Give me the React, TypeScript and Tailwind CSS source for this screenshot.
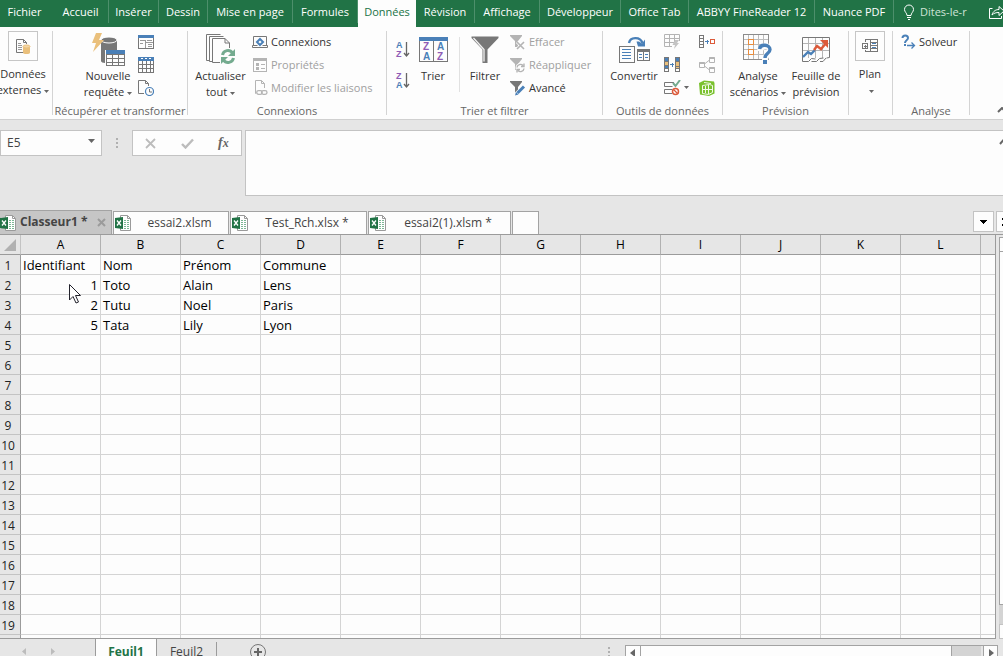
import React from 'react';
import clsx from 'clsx';

const GREY = '#777777';
const LIGHT = '#b4b4b4';
const BLUE = '#4a80b8';
const TAN = '#eac07c';
const RED = '#dc5a3a';
const GREEN = '#74ab8f';
const PURPLE = '#8f5bb5';

const ribbonTabs = [
  { name: 'Fichier', width: 'w-[49px]', divider: false },
  { name: 'Accueil', width: 'w-[60px] pl-1', divider: true },
  { name: 'Insérer', width: 'w-[50px]', divider: true },
  { name: 'Dessin', width: 'w-[49px]', divider: true },
  { name: 'Mise en page', width: 'w-[85px]', divider: true },
  { name: 'Formules', width: 'w-[65px]', divider: true },
  { name: 'Données', width: 'w-[58px]', divider: false },
  { name: 'Révision', width: 'w-[59px]', divider: true },
  { name: 'Affichage', width: 'w-[65px]', divider: true },
  { name: 'Développeur', width: 'w-[81px]', divider: true },
  { name: 'Office Tab', width: 'w-[68px]', divider: true },
  { name: 'ABBYY FineReader 12', width: 'w-[126px]', divider: true },
  { name: 'Nuance PDF', width: 'w-[79px]', divider: true },
];

const columns = ['A', 'B', 'C', 'D', 'E', 'F', 'G', 'H', 'I', 'J', 'K', 'L', ''];

const data: string[][] = [
  ['Identifiant', 'Nom', 'Prénom', 'Commune'],
  ['1', 'Toto', 'Alain', 'Lens'],
  ['2', 'Tutu', 'Noel', 'Paris'],
  ['5', 'Tata', 'Lily', 'Lyon'],
];

interface IconProps {
  w: number;
  h: number;
  crisp?: boolean;
  className?: string;
  children: React.ReactNode;
}

const Icon: React.FC<IconProps> = ({ w, h, crisp, className, children }) => (
  <svg
    width={w}
    height={h}
    viewBox={`0 0 ${w} ${h}`}
    fill="none"
    shapeRendering={crisp ? 'crispEdges' : undefined}
    className={clsx('block shrink-0', className)}
    aria-hidden="true"
  >
    {children}
  </svg>
);

const Caret = ({ color = '#666666' }: { color?: string }) => (
  <Icon w={5} h={3} className="ml-[3px] inline-block align-middle">
    <path d="M0 0h5L2.5 3z" fill={color} />
  </Icon>
);

/* ---------- ribbon icons ---------- */

const ExternalDataIcon = () => (
  <Icon w={16} h={18}>
    <path d="M9.500 15.500H1.500V2.500H8.500L11.500 5.500V7M8.500 2.500V5.500H11.500" stroke={GREY} />
    <path d="M3 6.500h3M3 8.500h4M3 10.500h4M3 12.500h4" stroke="#999999" />
    <path d="M8 9.500v6c0 1 1.500 1.500 3.500 1.500s3.500-.5 3.500-1.500v-6z" fill={TAN} />
    <ellipse cx="11.500" cy="9.500" rx="3.500" ry="1.500" fill="#f2d5a5" stroke={TAN} />
  </Icon>
);

const NewQueryIcon = () => (
  <Icon w={34} h={34}>
    <path d="M10 7v21c0 1 2 2 4 2V18h12V7z" fill={GREY} />
    <ellipse cx="18" cy="7" rx="8" ry="3" fill={GREY} stroke="#fdfdfd" />
    <path d="M5 0h6L8 7h5L2 19l3-9H1z" fill={TAN} />
    <g shapeRendering="crispEdges">
      <path d="M14 17h20v16H14z" fill="#fdfdfd" />
      <path d="M15 17h19v4H15z" fill={BLUE} />
      <path d="M15.500 21.500h18v11h-18zM15 25.500h19M15 29.500h19M21.500 21v12M27.500 21v12" stroke={GREY} />
    </g>
  </Icon>
);

const QueryPaneIcon = () => (
  <Icon w={16} h={14} crisp>
    <path d="M.5.5h15v13H.5z" stroke={GREY} />
    <path d="M0 0h16v3H0z" fill={BLUE} />
    <path d="M2 5.500h5M2 8.500h3M7.500 5v8M8 7.500h7M9 5.500h5M10 9.500h4M10 11.500h4" stroke="#999999" />
  </Icon>
);

const FromTableIcon = () => (
  <Icon w={16} h={16} crisp>
    <path d="M.5.5h15v15H.5zM0 7.500h16M0 11.500h16M4.500 4v12M8.500 4v12M12.500 4v12" stroke={GREY} />
    <path d="M0 0h16v4H0z" fill={BLUE} />
    <path d="M3 1h2l-1 2zM7 1h2l-1 2zM11 1h2l-1 2z" fill="#ffffff" />
  </Icon>
);

const RecentSourcesIcon = () => (
  <Icon w={16} h={16}>
    <path d="M6 13.500H.5V.5H7.500L10.500 3.500V6M7.500.5V3.500H10.500" stroke={GREY} />
    <circle cx="11.500" cy="11.500" r="4" fill="#fdfdfd" stroke={BLUE} strokeWidth="1.200" />
    <path d="M11.500 9v3H14" stroke={GREY} />
  </Icon>
);

const RefreshAllIcon = () => (
  <Icon w={30} h={31}>
    <path d="M3.500 26.500h-3V.5h14M6.500 27.500h-3v-25h14M14 28.500H6.500V4.500H19L23.500 9V14M19 4.500V9H23.500" stroke={GREY} />
    <path d="M16.500 21a5.500 5.500 0 0 1 10-2" stroke={GREEN} strokeWidth="3" />
    <path d="M29 15v7h-7z" fill={GREEN} />
    <path d="M27.500 24a5.500 5.500 0 0 1-10 2" stroke={GREEN} strokeWidth="3" />
    <path d="M15 30v-7h7z" fill={GREEN} />
  </Icon>
);

const ConnectionsIcon = () => (
  <Icon w={16} h={16}>
    <path d="M1.500 11V2.500h13V11" stroke={GREY} />
    <path d="M.5 11.500h5M10.500 11.500h5v2H.5v-2" stroke={GREY} />
    <path d="M8 5l3 3-3 3-3-3z" stroke={BLUE} strokeWidth="2" />
  </Icon>
);

const PropertiesIcon = () => (
  <Icon w={16} h={16} crisp>
    <path d="M1.500 1.500h13v13h-13z" stroke={LIGHT} />
    <path d="M1 1h14v3H1z" fill={LIGHT} />
    <path d="M4 6h3v3H4zM4 10h3v3H4z" fill={LIGHT} />
    <path d="M9 7.500h4M9 11.500h4" stroke={LIGHT} />
  </Icon>
);

const EditLinksIcon = () => (
  <Icon w={16} h={16}>
    <path d="M4 13.500H3.500V.5H9.500L12.500 3.500V8M9.500.5V3.500H12.500" stroke={LIGHT} />
    <rect x="4.700" y="10.700" width="5.500" height="3.600" rx="1.800" stroke={LIGHT} strokeWidth="1.300" />
    <rect x="9.500" y="10.700" width="5.500" height="3.600" rx="1.800" stroke={LIGHT} strokeWidth="1.300" />
  </Icon>
);

const letter = "font-['Liberation_Sans',sans-serif] font-bold";

const SortGlyph = ({ top, bottom, topColor, bottomColor }: { top: string; bottom: string; topColor: string; bottomColor: string }) => (
  <Icon w={15} h={18} className="overflow-visible">
    <text x="1" y="8" fontSize="9" className={letter} fill={topColor}>{top}</text>
    <text x="1" y="17" fontSize="9" className={letter} fill={bottomColor}>{bottom}</text>
    <path d="M11.500 2v14M9 13l2.500 3 2.500-3" stroke="#666666" strokeWidth="1.300" />
  </Icon>
);

const SortIcon = () => (
  <Icon w={29} h={25} className="overflow-visible">
    <g shapeRendering="crispEdges">
      <path d="M.5.5h28v24H.5zM14.500 4v21" stroke={GREY} />
      <path d="M0 0h29v4H0z" fill={BLUE} />
    </g>
    <text x="4" y="13" fontSize="10" className={letter} fill={PURPLE}>Z</text>
    <text x="18" y="13" fontSize="10" className={letter} fill={BLUE}>A</text>
    <text x="4" y="23" fontSize="10" className={letter} fill={BLUE}>A</text>
    <text x="18" y="23" fontSize="10" className={letter} fill={PURPLE}>Z</text>
  </Icon>
);

const FilterIcon = () => (
  <Icon w={28} h={28}>
    <path d="M.5.5h27v1.500L16.500 13.500V27h-5V13.500L.5 2z" fill={GREY} />
    <path d="M2.500 2l10.500 11.500V25.500" stroke="#f2f2f2" strokeWidth="1.300" />
  </Icon>
);

const ClearIcon = () => (
  <Icon w={16} h={16}>
    <path d="M0 1h12v1L8 7v6H5V7L0 2z" fill={LIGHT} />
    <path d="M7 8l7 7M14 8l-7 7" stroke="#fdfdfd" strokeWidth="3" />
    <path d="M7 8l7 7M14 8l-7 7" stroke={LIGHT} strokeWidth="1.600" />
  </Icon>
);

const ReapplyIcon = () => (
  <Icon w={16} h={16}>
    <path d="M0 1h12v1L8 7v6H5V7L0 2z" fill={LIGHT} />
    <circle cx="10.500" cy="11" r="5" fill="#fdfdfd" />
    <path d="M7 10.500a3.500 3.500 0 0 1 6-2M14 6.500v3h-3M14 11.500a3.500 3.500 0 0 1-6 2M7 15.500v-3h3" stroke={LIGHT} strokeWidth="1.400" />
  </Icon>
);

const AdvancedIcon = () => (
  <Icon w={16} h={16}>
    <path d="M0 1h12v1L8 7v6H5V7L0 2z" fill={GREY} />
    <path d="M6.500 14.500L14 7" stroke="#fdfdfd" strokeWidth="5" />
    <path d="M7.500 13L14 6.500" stroke={BLUE} strokeWidth="3" />
    <path d="M5 15.500l1-3.500 2.500 2.500z" fill={BLUE} />
  </Icon>
);

const ConvertIcon = () => (
  <Icon w={31} h={27}>
    <path d="M10 7C11 1 21 0 23.500 7" stroke={BLUE} strokeWidth="2.400" />
    <path d="M17.500 5.500H20l3 2 3-4v7h-7z" fill={BLUE} />
    <g shapeRendering="crispEdges">
      <path d="M.5 10.500h15v16H.5z" stroke={GREY} fill="#fdfdfd" />
      <path d="M3 13.500h9M3 16.500h9M3 19.500h9M3 22.500h9" stroke={BLUE} />
      <path d="M18.500 13.500h12v11h-12zM24.500 16v8" stroke={GREY} />
      <path d="M18 13h13v3H18z" fill={GREY} />
      <path d="M20 18.500h3M26 18.500h3M20 21.500h3M26 21.500h3" stroke={BLUE} />
    </g>
  </Icon>
);

const FlashFillIcon = () => (
  <Icon w={16} h={16}>
    <path d="M.5.5h15v4H.5zM.5 4.500v8H8M.5 8.500H10M5.500 0v13M10.500 0v8M15.500 4v3" stroke={LIGHT} />
    <path d="M11 6h4l-2 3h2l-5 6 1-4H8.500z" fill="#c4c4c4" />
  </Icon>
);

const DuplicatesIcon = () => (
  <Icon w={16} h={15} crisp>
    <path d="M0 0h5v15H0zM11 0h5v15h-5z" fill={GREY} />
    <path d="M1 1h3v3H1zM1 9h3v2H1zM12 1h3v3h-3z" fill={BLUE} />
    <path d="M1 5h3v3H1zM12 5h3v4h-3zM12 10h3v1h-3z" fill={TAN} />
    <path d="M1 12h3v2H1zM12 12h3v2h-3z" fill="#fdfdfd" />
    <path d="M6 7.500h4M8.500 5.500v4" stroke={BLUE} />
  </Icon>
);

const ValidationIcon = () => (
  <Icon w={17} h={16}>
    <path d="M10 2.500H.5v4h8M8 9.500H.5v4H8" stroke={GREY} />
    <path d="M9 3l2.500 3L16 0" stroke={GREEN} strokeWidth="2" />
    <circle cx="11.500" cy="11.500" r="3" fill="#fdfdfd" stroke={RED} strokeWidth="1.500" />
    <path d="M9.500 9.500l4 4" stroke={RED} strokeWidth="1.300" />
  </Icon>
);

const ConsolidateIcon = () => (
  <Icon w={16} h={13} crisp>
    <path d="M.5.5h4v12h-4zM0 3.500h5M0 6.500h5M0 9.500h5" stroke={GREY} />
    <path d="M6 6.500h4M8.500 4.500v4" stroke={BLUE} />
    <path d="M11.500 4.500h4v4h-4z" stroke={RED} />
  </Icon>
);

const RelationsIcon = () => (
  <Icon w={16} h={16}>
    <path d="M.5 5.500h5v5h-5zM10.500.5h5v5h-5zM10.500 10.500h5v5h-5zM5.500 7l5-4M5.500 9l5 4" stroke={LIGHT} />
    <path d="M.5 6h5M10.500 1h5M10.500 11h5" stroke={LIGHT} strokeWidth="2" />
  </Icon>
);

const DataModelIcon = () => (
  <Icon w={16} h={16}>
    <path d="M0 3l5-2.500 10 1 .5 2v10L10 16l-9-1.500z" fill="#7ac12f" />
    <path d="M3.500 5.500l7-1 3 1v7l-4 2-6-1zM5 2.500l7 1" stroke="#f1f9e8" />
    <path d="M6.500 6v7M9.500 5v9M4 9.500h9" stroke="#f1f9e8" />
  </Icon>
);

const WhatIfIcon = () => (
  <Icon w={31} h={31}>
    <g shapeRendering="crispEdges">
      <path d="M5.500 0v26M10.500 0v26M15.500 0v26M20.500 0v26M0 5.500h26M0 10.500h26M0 15.500h26M0 20.500h26" stroke="#bdbdbd" />
      <path d="M.5.500h25v25H.5z" stroke="#8c8c8c" />
      <path d="M5.500 5.500h5v5h-5zM5.500 15.500h5v5h-5z" fill="#fdfdfd" stroke="#e88c3c" />
    </g>
    <path d="M17 17c0-6 10.500-6 10.500-1 0 4-5.500 4-5.500 10" stroke="#fdfdfd" strokeWidth="6" />
    <path d="M16.500 15c1-5.500 10.500-4.500 10.500.5 0 4-5 3.500-5 8.500" stroke={BLUE} strokeWidth="3.400" />
    <path d="M20 26h4v4h-4z" fill={BLUE} />
  </Icon>
);

const ForecastIcon = () => (
  <Icon w={28} h={26}>
    <path d="M6.500 0v21M13.500 0v21M20.500 0v21M0 6.500h28M0 13.500h28" stroke="#b5b5b5" shapeRendering="crispEdges" />
    <path d="M.5.500h27v20l-3 .5M.5.500v24h6l3-3 4 .5M9.500 24.500h5l3-3 4-.5M18 24.500h3l3-3.500" stroke={GREY} />
    <path d="M1 20l5-5 3 2 4-4" stroke={BLUE} strokeWidth="2.400" />
    <path d="M12 13l3-4 4 3 6-7" stroke={RED} strokeWidth="2.400" />
    <path d="M18 3h8v8z" fill={RED} />
  </Icon>
);

const OutlineIcon = () => (
  <Icon w={16} h={14} crisp>
    <path d="M5 .5h2.500M5 12.500h2.500M.5 4.500h5v5h-5zM2 7.500h3M3.500 6v3M8.500.5h7v12h-7zM8 3.500h8M8 6.500h8M8 9.500h8" stroke={GREY} />
    <path d="M3.500 3V.5H5M3.500 11v1.500H5" stroke={GREY} />
    <path d="M10 4.500h4M10 8.500h4" stroke={BLUE} />
  </Icon>
);

const SolverIcon = () => (
  <Icon w={15} h={15}>
    <path d="M1.500 4c0-3.500 5.500-3.500 5.500 0 0 2.500-3 2-3 5" stroke={BLUE} strokeWidth="2" />
    <path d="M3 10h2v2H3z" fill={BLUE} />
    <path d="M6 11.500h7M10.500 8.500l3 3-3 3" stroke={BLUE} strokeWidth="1.300" />
  </Icon>
);

const ExcelFileIcon = () => (
  <Icon w={16} h={16}>
    <path d="M5.500.5h7l3 3v12h-10z" fill="#ffffff" stroke="#9a9a9a" />
    <path d="M12.500.5v3h3" stroke="#9a9a9a" />
    <path d="M9 5.500h2M12 5.500h2M9 7.500h2M12 7.500h2M9 9.500h2M12 9.500h2M9 11.500h2M12 11.500h2M9 13.500h2M12 13.500h2" stroke="#7db795" />
    <path d="M0 3l8-1v12l-8-1z" fill="#217346" />
    <path d="M2 5.500l4 5M6 5.500l-4 5" stroke="#ffffff" strokeWidth="1.300" />
  </Icon>
);

/* ---------- ribbon building blocks ---------- */

const Group: React.FC<{ label?: string; width: string; children: React.ReactNode }> = ({ label, width, children }) => (
  <section className={clsx('flex shrink-0', width)}>
    <div className="flex min-w-0 flex-1 flex-col">
      <div className="flex flex-1 items-start">{children}</div>
      <div className="h-4 text-center leading-4 whitespace-nowrap text-[#666666]">{label}</div>
    </div>
    <div className="my-1 w-px bg-[#d4d4d4]" />
  </section>
);

const BigButton: React.FC<{ icon: React.ReactNode; width: string; children: React.ReactNode }> = ({ icon, width, children }) => (
  <button className={clsx('flex shrink-0 flex-col items-center pt-1 leading-4 whitespace-nowrap', width)}>
    <span className="flex h-[37px] items-center">{icon}</span>
    <span>{children}</span>
  </button>
);

const BoxedButton: React.FC<{ icon: React.ReactNode; width: string; children: React.ReactNode }> = ({ icon, width, children }) => (
  <button className={clsx('flex shrink-0 flex-col items-center pt-1 leading-4 whitespace-nowrap', width)}>
    <span className="mb-[5px] flex size-[30px] items-center justify-center border border-[#c6c6c6]">{icon}</span>
    <span>{children}</span>
  </button>
);

const SmallButton: React.FC<{ icon: React.ReactNode; label: string; disabled?: boolean }> = ({ icon, label, disabled }) => (
  <button
    disabled={disabled}
    className={clsx('flex h-[23px] items-center gap-[3px] whitespace-nowrap', disabled && 'text-[#a0a0a0]')}
  >
    {icon}
    {label}
  </button>
);

const IconButton: React.FC<{ label: string; children: React.ReactNode }> = ({ label, children }) => (
  <button aria-label={label} className="flex h-[23px] items-center">
    {children}
  </button>
);

const RibbonTabs = () => (
  <nav className="flex h-[27px] shrink-0 overflow-hidden bg-[#217346] text-[11px] text-white">
    {ribbonTabs.map((tab) => (
      <div key={tab.name} className={clsx('flex shrink-0', tab.width)}>
        <button
          className={clsx(
            'flex flex-1 items-center justify-center pb-[3px] whitespace-nowrap',
            tab.name === 'Données' && 'bg-[#fdfdfd] text-[#217346]'
          )}
        >
          {tab.name}
        </button>
        {tab.divider && <div className="mb-1 w-px bg-[#4d8f6b]" />}
      </div>
    ))}
    <button className="flex flex-1 items-center gap-1 pb-[3px] pl-2 whitespace-nowrap text-[#cfe3d7]">
      <Icon w={14} h={16}>
        <path d="M5 11.500C5 9 2.500 8 2.500 5.500a4.500 4.500 0 0 1 9 0C11.500 8 9 9 9 11.500zM5 13.500h4M6 15.500h2" stroke="#ffffff" />
      </Icon>
      Dites-le-r
    </button>
    <button aria-label="Partager" className="flex w-[14px] shrink-0 items-center overflow-hidden pb-[3px]">
      <Icon w={17} h={16}>
        <path d="M3.500 4.500H.5v10h12V12M3 11c1-4 4-5.500 7-5.500v-3l5 4.500-5 4.500v-3c-3 0-5 .5-7 2.500z" stroke="#ffffff" />
      </Icon>
    </button>
  </nav>
);

const Ribbon = () => (
  <div className="flex h-[93px] shrink-0 overflow-hidden border-b border-[#d0d0d0] bg-[#fdfdfd] text-[11px] text-[#333333]">
    <Group width="w-[53px]">
      <BoxedButton icon={<ExternalDataIcon />} width="w-[46px]">
        Données<br />externes<Caret />
      </BoxedButton>
    </Group>

    <Group label="Récupérer et transformer" width="w-[135px]">
      <BigButton icon={<NewQueryIcon />} width="ml-7 w-[54px]">
        Nouvelle<br />requête<Caret />
      </BigButton>
      <div className="ml-[3px] flex flex-col pt-[3px]">
        <IconButton label="Afficher les requêtes"><QueryPaneIcon /></IconButton>
        <IconButton label="À partir d'un tableau"><FromTableIcon /></IconButton>
        <IconButton label="Sources récentes"><RecentSourcesIcon /></IconButton>
      </div>
    </Group>

    <Group label="Connexions" width="w-[199px]">
      <BigButton icon={<RefreshAllIcon />} width="ml-0.5 w-[61px]">
        Actualiser<br />tout<Caret />
      </BigButton>
      <div className="flex flex-col pt-[3px] pl-px">
        <SmallButton icon={<ConnectionsIcon />} label="Connexions" />
        <SmallButton icon={<PropertiesIcon />} label="Propriétés" disabled />
        <SmallButton icon={<EditLinksIcon />} label="Modifier les liaisons" disabled />
      </div>
    </Group>

    <Group label="Trier et filtrer" width="w-[216px]">
      <div className="ml-2 flex flex-col gap-[13px] pt-[13px]">
        <button aria-label="Trier de A à Z">
          <SortGlyph top="A" bottom="Z" topColor={BLUE} bottomColor={PURPLE} />
        </button>
        <button aria-label="Trier de Z à A">
          <SortGlyph top="Z" bottom="A" topColor={PURPLE} bottomColor={BLUE} />
        </button>
      </div>
      <BigButton icon={<SortIcon />} width="ml-[3px] w-10">Trier</BigButton>
      <div className="mt-[10px] ml-[6px] h-[55px] w-px bg-[#e1e1e1]" />
      <BigButton icon={<FilterIcon />} width="ml-1 w-[42px]">Filtrer</BigButton>
      <div className="ml-1 flex flex-col pt-[3px]">
        <SmallButton icon={<ClearIcon />} label="Effacer" disabled />
        <SmallButton icon={<ReapplyIcon />} label="Réappliquer" disabled />
        <SmallButton icon={<AdvancedIcon />} label="Avancé" />
      </div>
    </Group>

    <Group label="Outils de données" width="w-[120px]">
      <BigButton icon={<ConvertIcon />} width="ml-1 w-[54px]">Convertir</BigButton>
      <div className="ml-[3px] flex w-[35px] flex-col pt-[3px]">
        <IconButton label="Remplissage instantané"><FlashFillIcon /></IconButton>
        <IconButton label="Supprimer les doublons"><DuplicatesIcon /></IconButton>
        <IconButton label="Validation des données"><ValidationIcon /><Caret /></IconButton>
      </div>
      <div className="flex flex-col pt-[3px]">
        <IconButton label="Consolider"><ConsolidateIcon /></IconButton>
        <IconButton label="Relations"><RelationsIcon /></IconButton>
        <IconButton label="Gérer le modèle de données"><DataModelIcon /></IconButton>
      </div>
    </Group>

    <Group label="Prévision" width="w-[126px]">
      <BigButton icon={<WhatIfIcon />} width="ml-1 w-[62px]">
        Analyse<br />scénarios<Caret />
      </BigButton>
      <BigButton icon={<ForecastIcon />} width="w-[54px]">
        Feuille de<br />prévision
      </BigButton>
    </Group>

    <Group width="w-11">
      <BoxedButton icon={<OutlineIcon />} width="w-[42px]">
        Plan<br /><Caret />
      </BoxedButton>
    </Group>

    <Group label="Analyse" width="w-[77px]">
      <div className="flex flex-col pt-[3px] pl-2">
        <SmallButton icon={<SolverIcon />} label="Solveur" />
      </div>
    </Group>

    <div className="flex flex-1 items-end justify-end pb-1.5">
      <button aria-label="Réduire le ruban" className="w-[6px] overflow-hidden">
        <Icon w={10} h={6}>
          <path d="M1 5l4-4 4 4" stroke="#666666" strokeWidth="2" />
        </Icon>
      </button>
    </div>
  </div>
);

const FormulaBar = () => (
  <div className="flex h-[90px] shrink-0 items-start pt-[10px] text-[#444444]">
    <div className="flex h-[26px] w-[102px] border border-[#c3c3c3] bg-[#fdfdfd]">
      <input aria-label="Zone Nom" defaultValue="E5" className="w-0 flex-1 pl-1.5 outline-none" />
      <button aria-label="Noms définis" className="w-5 pb-1">
        <Icon w={7} h={4} className="mx-auto">
          <path d="M0 0h7L3.500 4z" fill="#666666" />
        </Icon>
      </button>
    </div>
    <div className="flex h-[26px] w-[30px] items-center justify-center">
      <Icon w={2} h={10} crisp>
        <path d="M0 0h2v2H0zM0 4h2v2H0zM0 8h2v2H0z" fill="#b0b0b0" />
      </Icon>
    </div>
    <div className="flex h-[26px] w-[110px] items-center justify-around border border-[#c3c3c3] bg-[#fdfdfd]">
      <button aria-label="Annuler">
        <Icon w={11} h={11}>
          <path d="M1 1l9 9M10 1L1 10" stroke="#bcbcbc" strokeWidth="1.800" />
        </Icon>
      </button>
      <button aria-label="Entrer">
        <Icon w={13} h={11}>
          <path d="M1 6l3.500 3.500L12 1.500" stroke="#bcbcbc" strokeWidth="2.400" />
        </Icon>
      </button>
      <button className="font-['Liberation_Serif',serif] text-sm leading-4 font-bold text-[#666666] italic">
        f<span className="text-xs">x</span>
      </button>
    </div>
    <div className="ml-[3px] flex h-[66px] flex-1 border border-r-0 border-[#c3c3c3] bg-[#fdfdfd]">
      <textarea aria-label="Barre de formule" className="flex-1 resize-none outline-none" />
      <button aria-label="Réduire la barre de formule" className="w-1 self-start overflow-hidden pt-2">
        <Icon w={9} h={6}>
          <path d="M1 5l3.500-4L8 5" stroke="#666666" strokeWidth="2" />
        </Icon>
      </button>
    </div>
  </div>
);

const workbooks = [
  { name: 'essai2.xlsm', width: 'w-[116px]' },
  { name: 'Test_Rch.xlsx *', width: 'w-[137px]' },
  { name: 'essai2(1).xlsm *', width: 'w-[143px]' },
];

const WorkbookTabs = () => (
  <div className="flex h-[25px] shrink-0 items-stretch border-b border-[#9b9b9b] text-[#444444]">
    <button className="flex w-28 shrink-0 items-center border-t border-r border-[#a3a3a3] bg-[#c6c6c6] font-bold whitespace-nowrap">
      <ExcelFileIcon />
      <span className="ml-1 flex-1 pb-0.5 text-left">Classeur1 *</span>
      <Icon w={9} h={9} className="mr-[5px]">
        <path d="M1 1l7 7M8 1L1 8" stroke="#9b9b9b" strokeWidth="2" />
      </Icon>
    </button>
    {workbooks.map((book) => (
      <button
        key={book.name}
        className={clsx('mt-px ml-px flex shrink-0 items-center border border-b-0 border-[#a3a3a3] bg-[#fdfdfd] pl-px whitespace-nowrap', book.width)}
      >
        <ExcelFileIcon />
        <span className="flex-1 text-center">{book.name}</span>
      </button>
    ))}
    <button aria-label="Nouveau classeur" className="mt-px ml-px w-[27px] shrink-0 border border-b-0 border-[#a3a3a3] bg-[#fdfdfd]" />
    <div className="flex flex-1 justify-end gap-0.5 pt-px pb-0.5">
      <button aria-label="Liste des classeurs" className="flex w-[21px] items-center justify-center border border-[#c3c3c3] bg-[#fdfdfd]">
        <Icon w={7} h={4} crisp>
          <path d="M0 0h7L3.500 4z" fill="#000000" />
        </Icon>
      </button>
      <button aria-label="Options" className="flex w-[7px] items-center justify-end border border-r-0 border-[#c3c3c3] bg-[#fdfdfd]">
        <Icon w={1} h={8} crisp>
          <path d="M0 0h1v2H0zM0 6h1v2H0z" fill="#000000" />
        </Icon>
      </button>
    </div>
  </div>
);

const Sheet = () => (
  <div className="flex min-h-0 flex-1">
    <div className="relative min-w-0 flex-1 overflow-hidden border-r border-b border-[#9b9b9b] bg-[#fdfdfd]">
      <table className="w-full table-fixed border-separate border-spacing-0 text-[13px] leading-[17px] text-black">
        <colgroup>
          <col className="w-[21px]" />
          {columns.map((name, i) => (
            <col key={i} className={name ? 'w-20' : undefined} />
          ))}
        </colgroup>
        <thead>
          <tr className="h-5 bg-[#e6e6e6]">
            <th aria-label="Tout sélectionner" className="border-r border-b border-r-[#c3c3c3] border-b-[#9b9b9b] p-0">
              <Icon w={12} h={12} className="mt-px ml-1">
                <path d="M12 0v12H0z" fill="#b1b1b1" />
              </Icon>
            </th>
            {columns.map((name, i) => (
              <th key={i} className={clsx('border-b border-[#9b9b9b] p-0 text-xs leading-[19px] font-normal', name && 'border-r border-r-[#b1b1b1]')}>
                {name}
              </th>
            ))}
          </tr>
        </thead>
        <tbody>
          {Array.from({ length: 20 }, (_, r) => (
            <tr key={r} className="h-5">
              <th className="border-r border-b border-r-[#9b9b9b] border-b-[#c3c3c3] bg-[#e6e6e6] pt-0.5 pr-1 pb-0 pl-0 text-xs leading-[17px] font-normal text-[#222222]">
                {r + 1}
              </th>
              {columns.map((name, c) => (
                <td
                  key={c}
                  className={clsx(
                    'border-b border-[#d4d4d4] px-0.5 pt-0.5 pb-0 whitespace-nowrap',
                    name && 'border-r',
                    c === 0 && r > 0 && 'text-right'
                  )}
                >
                  {data[r]?.[c]}
                </td>
              ))}
            </tr>
          ))}
        </tbody>
      </table>
      <Icon w={13} h={20} className="absolute top-[49px] left-[69px]">
        <path d="M.5.5v15.500l3.500-3.500 3 6.500 2.500-1-3-6.500h5z" fill="#ffffff" stroke="#22222c" />
      </Icon>
    </div>
    <div className="flex w-[7px] flex-col pt-0.5 pl-[3px]">
      <div className="h-[15px] border border-r-0 border-[#a3a3a3] bg-[#fdfdfd]" />
      <div className="flex-1 border border-t-0 border-r-0 border-[#a3a3a3] bg-[#fdfdfd]" />
      <div className="h-[19px] bg-[#d4d4d4]" />
      <div className="h-[15px] border border-r-0 border-[#c3c3c3] bg-[#fdfdfd]" />
    </div>
  </div>
);

const SheetTabs = () => (
  <div className="h-[17px] shrink-0 overflow-hidden">
    <div className="flex h-[25px] items-stretch text-[#444444]">
      <div className="flex w-[95px] items-center gap-[25px] pl-[22px]">
        <button aria-label="Feuille précédente">
          <Icon w={4} h={7}><path d="M4 0v7L0 3.500z" fill="#bcbcbc" /></Icon>
        </button>
        <button aria-label="Feuille suivante">
          <Icon w={4} h={7}><path d="M0 0v7l4-3.500z" fill="#bcbcbc" /></Icon>
        </button>
      </div>
      <button className="w-[62px] border-x border-[#9b9b9b] bg-[#fdfdfd] font-bold text-[#217346]">
        Feuil1
      </button>
      <button className="mt-[3px] w-[60px] border-r border-[#9b9b9b] pb-[3px]">Feuil2</button>
      <button aria-label="Nouvelle feuille" className="ml-8">
        <Icon w={18} h={18}>
          <circle cx="9" cy="9" r="7.500" stroke="#777777" />
          <path d="M9 5v8M5 9h8" stroke="#666666" strokeWidth="2" />
        </Icon>
      </button>
      <div className="flex flex-1 items-center justify-end pr-[15px]">
        <Icon w={2} h={10} crisp>
          <path d="M0 0h2v2H0zM0 4h2v2H0zM0 8h2v2H0z" fill="#b0b0b0" />
        </Icon>
      </div>
      <div className="mt-1.5 mr-[5px] flex w-[373px] border-t border-[#a3a3a3]">
        <button aria-label="Défiler à gauche" className="flex w-4 items-start border-x border-[#a3a3a3] bg-[#fdfdfd] pt-[3px] pl-1">
          <Icon w={5} h={8}><path d="M5 0v8L0 4z" fill="#666666" /></Icon>
        </button>
        <div className="flex-1 border-r border-[#a3a3a3] bg-[#fdfdfd]" />
        <div className="w-[29px] bg-[#d4d4d4]" />
        <button aria-label="Défiler à droite" className="ml-0.5 flex w-[15px] items-start border-x border-[#a3a3a3] bg-[#fdfdfd] pt-[3px] pl-[5px]">
          <Icon w={5} h={8}><path d="M0 0v8l5-4z" fill="#666666" /></Icon>
        </button>
      </div>
    </div>
  </div>
);

const App: React.FC = () => {
  return (
    <div className="flex h-screen flex-col overflow-hidden bg-[#e6e6e6] font-['Open_Sans','Noto_Sans',sans-serif] text-[12px] leading-4">
      <RibbonTabs />
      <Ribbon />
      <FormulaBar />
      <WorkbookTabs />
      <Sheet />
      <SheetTabs />
    </div>
  );
};

export default App;
